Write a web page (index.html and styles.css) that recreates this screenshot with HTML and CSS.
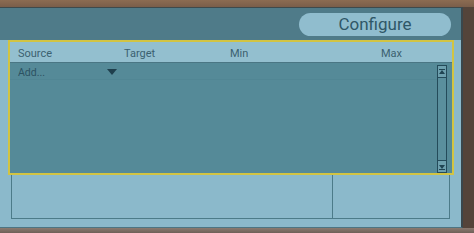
FILE: index.html
```html
<!DOCTYPE html>
<html>
<head>
<meta charset="utf-8">
<link rel="stylesheet" href="styles.css">
</head>
<body>
<div class="frame">
  <div class="panel">
    <div class="topbar">
      <button class="configure">Configure</button>
    </div>
    <div class="lower">
      <div class="table">
        <div class="thead">
          <span class="col c-source">Source</span>
          <span class="col c-target">Target</span>
          <span class="col c-min">Min</span>
          <span class="col c-max">Max</span>
        </div>
        <div class="tbody">
          <div class="rows">
            <div class="addrow">
              <span class="add">Add...</span>
              <svg class="caret" width="10" height="6" viewBox="0 0 10 6"><path d="M0 0H10L5 6Z" fill="#1f3f4d"/></svg>
            </div>
          </div>
          <div class="scrollbar">
            <div class="sbtn"><svg width="8" height="6" viewBox="0 0 8 6"><path d="M1 5H7L4 1Z" fill="#1f4452"/><rect x="1" y="0" width="6" height="1" fill="#1f4452"/></svg></div>
            <div class="strack"></div>
            <div class="sbtn"><svg width="8" height="6" viewBox="0 0 8 6"><path d="M1 1H7L4 5Z" fill="#1f4452"/><rect x="1" y="5" width="6" height="1" fill="#1f4452"/></svg></div>
          </div>
        </div>
      </div>
      <div class="details">
        <div class="dleft"></div>
        <div class="dright"></div>
      </div>
    </div>
  </div>
</div>
</body>
</html>
```
FILE: styles.css
```css
html, body {
  margin: 0;
  padding: 0;
}
body {
  width: 474px;
  height: 233px;
  overflow: hidden;
  background: #5a4a3f;
  font-family: "Roboto", "Liberation Sans", sans-serif;
}
.frame {
  width: 474px;
  height: 233px;
  box-sizing: border-box;
  padding-top: 7px;
  padding-bottom: 5px;
  background:
    linear-gradient(#8c6c52, #7a5e4a) top / 100% 7px no-repeat,
    linear-gradient(#8a7a70, #6f6058) bottom / 100% 5px no-repeat,
    #54443a;
}
.panel {
  width: 463px;
  height: 221px;
  box-sizing: border-box;
  border-top: 1px solid #3e4a4c;
  border-right: 2px solid #3a474c;
  border-bottom: 1px solid #4d7583;
  background: #8bb9cb;
  display: flex;
  flex-direction: column;
}
.topbar {
  height: 32px;
  background: #4f7b89;
  display: flex;
  justify-content: flex-end;
  align-items: flex-start;
  padding: 5px 10px 0 0;
  box-sizing: border-box;
  flex: none;
}
.configure {
  width: 152px;
  height: 23px;
  border: none;
  border-radius: 12px;
  background: #90bdce;
  color: #2f5767;
  font-family: "Roboto", "Liberation Sans", sans-serif;
  font-size: 17px;
  padding: 0;
  line-height: 23px;
}
.lower {
  flex: 1;
  padding: 0 7px 0 8px;
  display: flex;
  flex-direction: column;
}
.table {
  height: 135px;
  box-sizing: border-box;
  border: 2px solid #d2c443;
  display: flex;
  flex-direction: column;
  background: #558a98;
}
.thead {
  height: 20px;
  background: #93bfcf;
  border-bottom: 1px solid #4a7684;
  position: relative;
  font-size: 11px;
  color: #3b6170;
  flex: none;
}
.col {
  position: absolute;
  top: 5px;
}
.c-source { left: 8px; }
.c-target { left: 114px; }
.c-min { left: 220px; }
.c-max { left: 371px; }
.tbody {
  flex: 1;
  display: flex;
  padding: 2px 5px 0 0;
}
.rows {
  flex: 1;
}
.addrow {
  height: 14px;
  display: flex;
  align-items: center;
  padding-left: 8px;
  border-bottom: 1px solid #518694;
}
.add {
  font-size: 10.5px;
  color: #2c5262;
  width: 89px;
}
.caret {
  display: block;
}
.scrollbar {
  width: 10px;
  box-sizing: border-box;
  border: 1px solid #244b5a;
  display: flex;
  flex-direction: column;
  background: #5a8f9d;
}
.sbtn {
  height: 11px;
  flex: none;
  display: flex;
  align-items: center;
  justify-content: center;
  background: #6da0ae;
}
.sbtn:first-child { border-bottom: 1px solid #244b5a; }
.sbtn:last-child { border-top: 1px solid #244b5a; }
.sbtn svg { display: block; }
.strack {
  flex: 1;
}
.details {
  height: 44px;
  margin: 0 4px 0 3px;
  box-sizing: border-box;
  border: 1px solid #4c7b89;
  border-top: 0;
  display: flex;
}
.dleft {
  width: 320px;
  border-right: 1px solid #4c7b89;
}
.dright {
  flex: 1;
}
```
